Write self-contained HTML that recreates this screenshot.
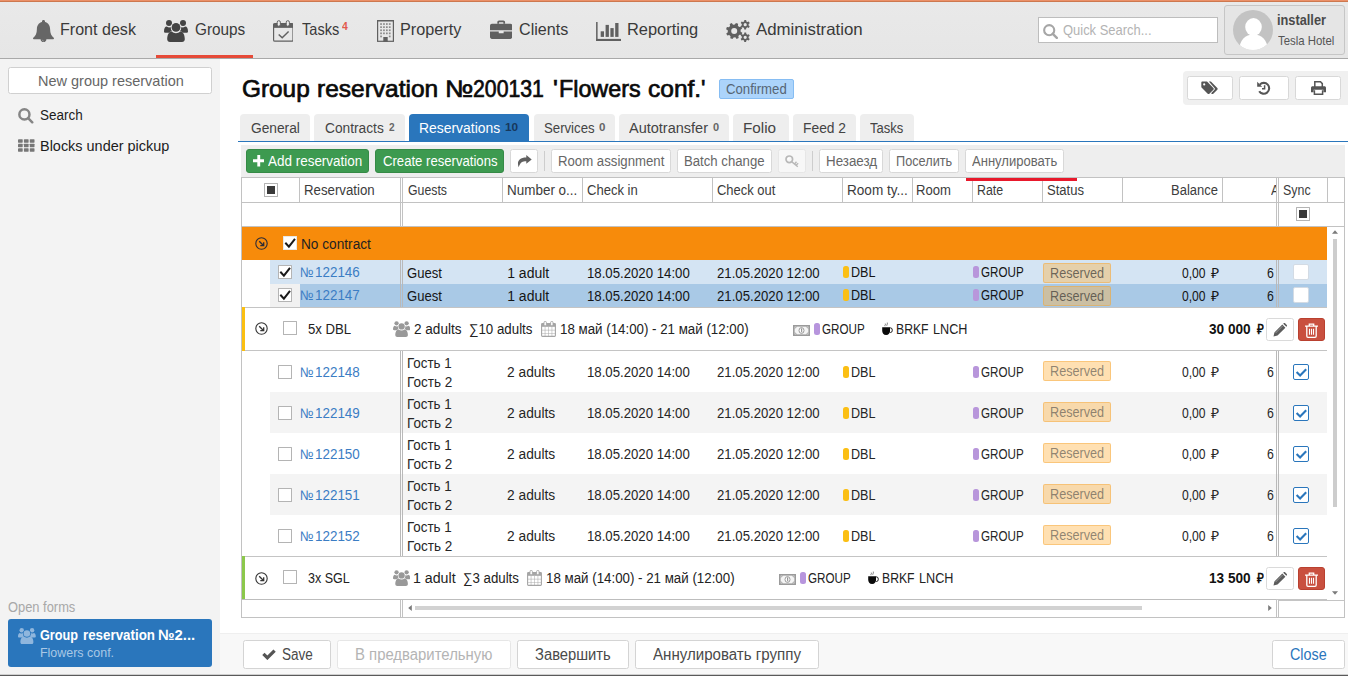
<!DOCTYPE html>
<html lang="en"><head><meta charset="utf-8"><title>Group reservation №200131</title>
<style>
html,body{margin:0;padding:0}
body{width:1348px;height:676px;position:relative;overflow:hidden;background:#fff;font-family:"Liberation Sans",sans-serif;}
div,span,a,button,nav,header,aside,main,footer,section,svg.i,sup,b,i{position:absolute;box-sizing:border-box;margin:0;padding:0}
header,nav,aside,main,footer,section{left:0;top:0;width:0;height:0;display:block}
.t{white-space:nowrap;transform-origin:0 0;text-decoration:none;font-style:normal}
button{border:0;background:none;font:inherit}
.btn{background:#fff;border:1px solid #d8d8d8;border-radius:2.5px}
.tab{background:#eee;border-radius:4px 4px 0 0}
.cb{background:#fff;border:1px solid #b4b4b4;border-radius:.5px}
.pill{border-radius:2.5px}
.rsv{background:rgba(255,178,62,.4);border:1px solid rgba(243,160,40,.4);border-radius:2px}
</style></head>
<body>
<header>
<div style="left:0px;top:0px;width:1348px;height:59px;background:linear-gradient(#e9e9e9,#e6e6e6);border-bottom:1px solid #a9a9a9"></div>
<div style="left:0px;top:0px;width:1348px;height:1px;background:#eb9068"></div>
<div style="left:0px;top:1px;width:1348px;height:1px;background:#cd784f"></div>
<nav>
<a class="t" style="left:59.53px;top:19px;font-size:16.5px;line-height:20px;color:#3a3a3a;transform:scaleX(0.9743);">Front desk</a>
<a class="t" style="left:194.50px;top:19px;font-size:16.5px;line-height:20px;color:#3a3a3a;transform:scaleX(0.9284);">Groups</a>
<a class="t" style="left:302.00px;top:19px;font-size:16.5px;line-height:20px;color:#3a3a3a;transform:scaleX(0.8825);">Tasks</a>
<a class="t" style="left:399.52px;top:19px;font-size:16.5px;line-height:20px;color:#3a3a3a;transform:scaleX(0.9822);">Property</a>
<a class="t" style="left:518.50px;top:19px;font-size:16.5px;line-height:20px;color:#3a3a3a;transform:scaleX(0.9764);">Clients</a>
<a class="t" style="left:626.51px;top:19px;font-size:16.5px;line-height:20px;color:#3a3a3a;transform:scaleX(0.9948);">Reporting</a>
<a class="t" style="left:756.00px;top:19px;font-size:16.5px;line-height:20px;color:#3a3a3a;transform:scaleX(1.0204);">Administration</a>
<sup class="t" style="left:342.20px;top:20px;font-size:11px;line-height:13px;color:#e25a4c;font-weight:700;transform:scaleX(0.9429);">4</sup>
<div style="left:156px;top:55px;width:97px;height:3px;background:#e64a38"></div>
<svg class="i" style="left:32.5px;top:19.6px;" width="21" height="23" viewBox="0 0 21 23"><path fill="#666" d="M10.500 0c0.900 0 1.500 0.600 1.500 1.400v0.500c3.100 0.700 5.100 3.500 5.100 7.200 0 4.600 1.400 7 3.600 8.700 0.500 0.400 0.300 1.400-0.500 1.400H13.400c0 1.600-1.300 2.900-2.900 2.900s-2.900-1.300-2.900-2.900H0.800c-0.800 0-1-1-0.500-1.400C2.500 16.100 3.900 13.700 3.900 9.100c0-3.700 2-6.500 5.100-7.200V1.400C9 0.600 9.600 0 10.500 0z"/><path d="M9.300 19.800c0.200 0.900 0.700 1.300 1.400 1.400" fill="none" stroke="#e9e9e9" stroke-width="0.600" opacity=".7"/></svg>
<svg class="i" style="left:164px;top:20px;" width="24" height="22" viewBox="0 0 24 22"><g fill="#444"><circle cx="5" cy="3.100" r="3"/><circle cx="19" cy="3.100" r="3"/><path d="M0 11.500C0 8.500 1.200 6.600 2.600 6.600c0.700 0.500 1.500 0.800 2.400 0.800 0.700 0 1.400-0.200 2-0.500 0 1.600 0.600 3 1.600 4.200-1.300 0.100-2.400 0.700-3.300 1.700H1.600C0.600 12.800 0 12.300 0 11.500z"/><path d="M24 11.500c0-3-1.200-4.900-2.600-4.900-0.700 0.500-1.500 0.800-2.400 0.800-0.700 0-1.400-0.200-2-0.500 0 1.600-0.600 3-1.600 4.200 1.300 0.100 2.400 0.700 3.300 1.700h3.700c1 0 1.600-0.500 1.600-1.300z"/><circle cx="12" cy="7.400" r="5.300" fill="#e9e9e9"/><path fill="#e9e9e9" d="M2.300 22.600c0-6 3-10.300 6-10.300h7.400c3 0 6 4.300 6 10.300z"/><circle cx="12" cy="7.400" r="4.400"/><path d="M3.200 19.300c0-4.300 1.800-7.700 4.700-7.700 1.100 1 2.500 1.600 4.100 1.600s3-0.600 4.100-1.600c2.900 0 4.700 3.400 4.700 7.700 0 1.600-1.100 2.700-2.800 2.700H6c-1.700 0-2.800-1.100-2.800-2.700z"/></g></svg>
<svg class="i" style="left:272.8px;top:20px;" width="20.6" height="22" viewBox="0 0 21 22"><rect x="0.600" y="3.400" width="19.800" height="18" rx="1.300" fill="none" stroke="#606060" stroke-width="1.200"/><rect x="0.600" y="3.400" width="19.800" height="4.400" fill="#606060"/><rect x="4.300" y="0.500" width="3.200" height="5.600" rx="1.500" fill="#eee" stroke="#606060" stroke-width="1"/><rect x="13.500" y="0.500" width="3.200" height="5.600" rx="1.500" fill="#eee" stroke="#606060" stroke-width="1"/><path d="M5.800 14.500l3.600 3.400 6.500-6.300" fill="none" stroke="#606060" stroke-width="1.500"/></svg>
<svg class="i" style="left:377px;top:20px;" width="17" height="22" viewBox="0 0 17 22"><rect x="0.600" y="0.700" width="15.800" height="20.600" fill="none" stroke="#606060" stroke-width="1.200"/><rect x="0" y="0" width="17" height="1.300" fill="#606060"/><rect x="3.20" y="3.20" width="1.700" height="1.700" fill="#8a8a8a"/><rect x="3.20" y="6.30" width="1.700" height="1.700" fill="#8a8a8a"/><rect x="3.20" y="9.40" width="1.700" height="1.700" fill="#8a8a8a"/><rect x="3.20" y="12.50" width="1.700" height="1.700" fill="#8a8a8a"/><rect x="3.20" y="15.60" width="1.700" height="1.700" fill="#8a8a8a"/><rect x="6.10" y="3.20" width="1.700" height="1.700" fill="#8a8a8a"/><rect x="6.10" y="6.30" width="1.700" height="1.700" fill="#8a8a8a"/><rect x="6.10" y="9.40" width="1.700" height="1.700" fill="#8a8a8a"/><rect x="6.10" y="12.50" width="1.700" height="1.700" fill="#8a8a8a"/><rect x="9.00" y="3.20" width="1.700" height="1.700" fill="#8a8a8a"/><rect x="9.00" y="6.30" width="1.700" height="1.700" fill="#8a8a8a"/><rect x="9.00" y="9.40" width="1.700" height="1.700" fill="#8a8a8a"/><rect x="9.00" y="12.50" width="1.700" height="1.700" fill="#8a8a8a"/><rect x="11.90" y="3.20" width="1.700" height="1.700" fill="#8a8a8a"/><rect x="11.90" y="6.30" width="1.700" height="1.700" fill="#8a8a8a"/><rect x="11.90" y="9.40" width="1.700" height="1.700" fill="#8a8a8a"/><rect x="11.90" y="12.50" width="1.700" height="1.700" fill="#8a8a8a"/><rect x="11.90" y="15.60" width="1.700" height="1.700" fill="#8a8a8a"/><rect x="6.300" y="17" width="4.400" height="5" fill="#606060"/></svg>
<svg class="i" style="left:489.7px;top:19.8px;" width="22.4" height="19.3" viewBox="0 0 23 19"><g fill="#606060"><path d="M7.500 3.500V1.800C7.500 0.800 8.300 0 9.300 0h4.400c1 0 1.800 0.800 1.800 1.800v1.700h-1.800V1.800H9.300v1.700z"/><path d="M2 3.500h19c1.100 0 2 0.900 2 2V10H0V5.500c0-1.100 0.900-2 2-2z"/><path d="M0 11.500h9v1.800h5v-1.800h9V17c0 1.100-0.900 2-2 2H2c-1.100 0-2-0.900-2-2z"/></g></svg>
<svg class="i" style="left:596px;top:21.8px;" width="25.2" height="19" viewBox="0 0 25 19"><g fill="#606060"><rect x="0" y="0" width="1.500" height="19"/><rect x="0" y="16.900" width="25" height="2.100"/><rect x="4.600" y="9.300" width="3.300" height="5.600"/><rect x="9.500" y="2.900" width="3.300" height="12"/><rect x="14.300" y="6.100" width="3.300" height="8.800"/><rect x="19.100" y="1" width="3.300" height="13.900"/></g></svg>
<svg class="i" style="left:725.8px;top:19.8px;" width="24" height="22" viewBox="0 0 24 22"><path fill="#606060" fill-rule="evenodd" d="M14.64,11.65 L16.32,12.73 L15.51,14.93 L13.53,14.67 L12.30,16.01 L12.72,17.96 L10.59,18.95 L9.38,17.37 L7.55,17.44 L6.47,19.12 L4.27,18.31 L4.53,16.33 L3.19,15.10 L1.24,15.52 L0.25,13.39 L1.83,12.18 L1.76,10.35 L0.08,9.27 L0.89,7.07 L2.87,7.33 L4.10,5.99 L3.68,4.04 L5.81,3.05 L7.02,4.63 L8.85,4.56 L9.93,2.88 L12.13,3.69 L11.87,5.67 L13.21,6.90 L15.16,6.48 L16.15,8.61 L14.57,9.82Z M5.20,11 a3.0,3.0 0 1,0 6.0,0 a3.0,3.0 0 1,0 -6.0,0Z"/><path fill="#606060" fill-rule="evenodd" d="M22.59,5.39 L23.71,6.33 L22.80,7.88 L21.43,7.34 L20.30,7.98 L20.05,9.43 L18.25,9.40 L18.03,7.95 L16.91,7.29 L15.53,7.79 L14.65,6.23 L15.80,5.31 L15.81,4.01 L14.69,3.07 L15.60,1.52 L16.97,2.06 L18.10,1.42 L18.35,-0.03 L20.15,-0.00 L20.37,1.45 L21.49,2.11 L22.87,1.61 L23.75,3.17 L22.60,4.09Z M17.60,4.7 a1.6,1.6 0 1,0 3.2,0 a1.6,1.6 0 1,0 -3.2,0Z"/><path fill="#606060" fill-rule="evenodd" d="M22.59,17.99 L23.71,18.93 L22.80,20.48 L21.43,19.94 L20.30,20.58 L20.05,22.03 L18.25,22.00 L18.03,20.55 L16.91,19.89 L15.53,20.39 L14.65,18.83 L15.80,17.91 L15.81,16.61 L14.69,15.67 L15.60,14.12 L16.97,14.66 L18.10,14.02 L18.35,12.57 L20.15,12.60 L20.37,14.05 L21.49,14.71 L22.87,14.21 L23.75,15.77 L22.60,16.69Z M17.60,17.3 a1.6,1.6 0 1,0 3.2,0 a1.6,1.6 0 1,0 -3.2,0Z"/></svg>
</nav>
<div style="left:1038px;top:17px;width:180px;height:26px;background:#fff;border:1px solid #bdbdbd"></div>
<svg class="i" style="left:1043px;top:24px;" width="15" height="15" viewBox="0 0 15 15"><circle cx="6.200" cy="6.200" r="5.05" fill="none" stroke="#a6a6a6" stroke-width="2.1"/><path d="M9.800 9.800L13.800 13.800" stroke="#a6a6a6" stroke-width="2.400" stroke-linecap="round"/></svg>
<span class="t" style="left:1062.50px;top:21px;font-size:15px;line-height:18px;color:#b3b3b3;transform:scaleX(0.8632);">Quick Search...</span>
<div style="left:1224px;top:5px;width:121px;height:50px;background:#e5e5e5;border:1px solid #c6c6c6;border-radius:3px"></div>
<svg class="i" style="left:1233px;top:10px" width="40" height="40" viewBox="0 0 40 40"><defs><clipPath id="avc"><circle cx="20" cy="20" r="20"/></clipPath></defs><circle cx="20" cy="20" r="20" fill="#c3c3c3"/><g clip-path="url(#avc)" fill="#fff"><ellipse cx="20.500" cy="17" rx="8.300" ry="9"/><path d="M6 42c0-11 5.500-17.500 14.500-17.500S35 31 35 42z"/></g></svg>
<span class="t" style="left:1276.80px;top:12px;font-size:14px;line-height:17px;color:#4a4a4a;font-weight:700;transform:scaleX(0.9126);">installer</span>
<span class="t" style="left:1277.50px;top:33px;font-size:13px;line-height:16px;color:#555;transform:scaleX(0.8771);">Tesla Hotel</span>
</header>
<aside>
<div style="left:0px;top:59px;width:220px;height:617px;background:#f3f3f3"></div>
<div class="btn" style="left:8px;top:67px;width:204px;height:27px;border-color:#d0d0d0"></div>
<button class="t" style="left:37.63px;top:72px;font-size:15px;line-height:18px;color:#666;transform:scaleX(0.9661);">New group reservation</button>
<svg class="i" style="left:18px;top:108px;" width="15.5" height="15.5" viewBox="0 0 15 15"><circle cx="6.200" cy="6.200" r="4.90" fill="none" stroke="#858585" stroke-width="2.4"/><path d="M9.800 9.800L13.800 13.800" stroke="#858585" stroke-width="2.400" stroke-linecap="round"/></svg>
<a class="t" style="left:40.40px;top:105px;font-size:15.5px;line-height:19px;color:#1c1c1c;transform:scaleX(0.8703);">Search</a>
<svg class="i" style="left:18px;top:139px;" width="16.5" height="13" viewBox="0 0 16.8 12.8"><rect x="0" y="0.0" width="4.800" height="3.600" rx="0.500" fill="#777"/><rect x="0" y="4.6" width="4.800" height="3.600" rx="0.500" fill="#777"/><rect x="0" y="9.2" width="4.800" height="3.600" rx="0.500" fill="#777"/><rect x="6" y="0.0" width="4.800" height="3.600" rx="0.500" fill="#777"/><rect x="6" y="4.6" width="4.800" height="3.600" rx="0.500" fill="#777"/><rect x="6" y="9.2" width="4.800" height="3.600" rx="0.500" fill="#777"/><rect x="12" y="0.0" width="4.800" height="3.600" rx="0.500" fill="#777"/><rect x="12" y="4.6" width="4.800" height="3.600" rx="0.500" fill="#777"/><rect x="12" y="9.2" width="4.800" height="3.600" rx="0.500" fill="#777"/></svg>
<a class="t" style="left:39.67px;top:136px;font-size:15.5px;line-height:19px;color:#1c1c1c;transform:scaleX(0.9322);">Blocks under pickup</a>
<span class="t" style="left:8.40px;top:599px;font-size:14px;line-height:17px;color:#a8a8a8;transform:scaleX(0.9202);">Open forms</span>
<div style="left:8px;top:619px;width:204px;height:48px;background:#2a76bc;border-radius:3px"></div>
<svg class="i" style="left:17.8px;top:627.8px;" width="17.8" height="16.3" viewBox="0 0 24 22"><g fill="#8fb6dd"><circle cx="5" cy="3.100" r="3"/><circle cx="19" cy="3.100" r="3"/><path d="M0 11.500C0 8.500 1.200 6.600 2.600 6.600c0.700 0.500 1.500 0.800 2.400 0.800 0.700 0 1.400-0.200 2-0.500 0 1.600 0.600 3 1.600 4.200-1.300 0.100-2.400 0.700-3.300 1.700H1.600C0.600 12.800 0 12.300 0 11.500z"/><path d="M24 11.500c0-3-1.200-4.900-2.600-4.900-0.700 0.500-1.500 0.800-2.400 0.800-0.700 0-1.400-0.200-2-0.500 0 1.600-0.600 3-1.600 4.200 1.300 0.100 2.400 0.700 3.300 1.700h3.700c1 0 1.600-0.500 1.600-1.300z"/><circle cx="12" cy="7.400" r="5.300" fill="#2a76bc"/><path fill="#2a76bc" d="M2.300 22.600c0-6 3-10.300 6-10.300h7.400c3 0 6 4.300 6 10.300z"/><circle cx="12" cy="7.400" r="4.400"/><path d="M3.200 19.300c0-4.300 1.800-7.700 4.700-7.700 1.100 1 2.500 1.600 4.100 1.600s3-0.600 4.100-1.600c2.900 0 4.700 3.400 4.700 7.700 0 1.600-1.100 2.700-2.800 2.700H6c-1.700 0-2.800-1.100-2.800-2.700z"/></g></svg>
<span class="t" style="left:40.20px;top:626px;font-size:15px;line-height:18px;color:#fff;font-weight:700;transform:scaleX(0.8454);">Group</span>
<span class="t" style="left:82.80px;top:626px;font-size:15px;line-height:18px;color:#fff;font-weight:700;transform:scaleX(0.8896);">reservation</span>
<span class="t" style="left:158.01px;top:626px;font-size:15px;line-height:18px;color:#fff;font-weight:700;transform:scaleX(0.9891);">№2...</span>
<span class="t" style="left:39.54px;top:645px;font-size:13px;line-height:16px;color:#a9c8e6;transform:scaleX(0.9579);">Flowers conf.</span>
</aside>
<main>
<h1 style="position:absolute;left:0;top:0;margin:0;width:0;height:0;font-weight:400">
<span class="t" style="left:241.69px;top:74px;font-size:24px;line-height:29px;color:#0a0a0a;transform:scaleX(1.0145);-webkit-text-stroke:0.7px #0a0a0a;">Group</span>
<span class="t" style="left:317.38px;top:74px;font-size:24px;line-height:29px;color:#0a0a0a;transform:scaleX(1.0208);-webkit-text-stroke:0.7px #0a0a0a;">reservation</span>
<span class="t" style="left:444.81px;top:74px;font-size:24px;line-height:29px;color:#0a0a0a;transform:scaleX(1.0957);-webkit-text-stroke:0.7px #0a0a0a;">№</span>
<span class="t" style="left:473.11px;top:74px;font-size:24px;line-height:29px;color:#0a0a0a;transform:scaleX(0.8852);-webkit-text-stroke:0.7px #0a0a0a;">200131</span>
<span class="t" style="left:552.63px;top:74px;font-size:24px;line-height:29px;color:#0a0a0a;transform:scaleX(1.0667);-webkit-text-stroke:0.7px #0a0a0a;">'</span>
<span class="t" style="left:559.43px;top:74px;font-size:24px;line-height:29px;color:#0a0a0a;transform:scaleX(0.9709);-webkit-text-stroke:0.7px #0a0a0a;">Flowers</span>
<span class="t" style="left:647.68px;top:74px;font-size:24px;line-height:29px;color:#0a0a0a;transform:scaleX(1.0210);-webkit-text-stroke:0.7px #0a0a0a;">conf.</span>
<span class="t" style="left:700.83px;top:74px;font-size:24px;line-height:29px;color:#0a0a0a;transform:scaleX(0.9667);-webkit-text-stroke:0.7px #0a0a0a;">'</span>
</h1>
<div style="left:719px;top:79px;width:75px;height:20px;background:#acd4fb;border:1px solid #86bdf3;border-radius:2px"></div>
<span class="t" style="left:726.00px;top:81px;font-size:14px;line-height:17px;color:#566574;transform:scaleX(0.9405);">Confirmed</span>
<div style="left:1183px;top:71px;width:165px;height:34px;background:#f0f0f0;border-radius:4px 0 0 4px"></div>
<div class="btn" style="left:1187px;top:76px;width:46px;height:24px;"></div>
<div class="btn" style="left:1239px;top:76px;width:50px;height:24px;"></div>
<div class="btn" style="left:1295px;top:76px;width:46px;height:24px;"></div>
<svg class="i" style="left:1201px;top:81px;" width="17" height="14.5" viewBox="0 0 17 14"><path fill="#555" d="M0.300 1.500C0.300 0.800 0.800 0.300 1.500 0.300H6L12.400 6.700c0.500 0.500 0.500 1.200 0 1.700L8.400 12.400c-0.500 0.500-1.200 0.500-1.700 0L0.300 6z"/><circle cx="3.200" cy="3.200" r="1.100" fill="#fff"/><path fill="#555" d="M7.800 0.300h2.100l6.400 6.400c0.500 0.500 0.500 1.200 0 1.700l-4 4c-0.500 0.500-1.200 0.500-1.700 0l-0.500-0.500 3.400-3.500c0.500-0.500 0.500-1.200 0-1.700z"/></svg>
<svg class="i" style="left:1257px;top:81px;" width="14" height="14" viewBox="0 0 14 14"><path d="M2.800 3.600A5.400 5.400 0 1 1 2.200 10.200" fill="none" stroke="#555" stroke-width="2.100"/><path d="M0.200 0.800v5h5z" fill="#555"/><path d="M7.600 4.200v3.600H5" fill="none" stroke="#555" stroke-width="1.500"/></svg>
<svg class="i" style="left:1311px;top:81px;" width="15" height="14" viewBox="0 0 15 14"><path fill="none" stroke="#555" stroke-width="1.500" d="M3.800 6V0.800h5.700l1.800 1.800V6"/><path fill="#555" d="M1.600 5.200h11.800c0.900 0 1.600 0.700 1.600 1.600v4.400h-2.600V8.800H2.600v2.400H0V6.800c0-0.900 0.700-1.600 1.600-1.600z"/><path fill="none" stroke="#555" stroke-width="1.500" d="M3.400 9.200v4h8.200v-4"/></svg>
<nav>
<div class="tab" style="left:240px;top:114px;width:69.5px;height:28px;"></div>
<a class="t" style="left:250.50px;top:118px;font-size:15.5px;line-height:19px;color:#444;transform:scaleX(0.8867);">General</a>
<div class="tab" style="left:314px;top:114px;width:90.5px;height:28px;"></div>
<a class="t" style="left:324.50px;top:118px;font-size:15.5px;line-height:19px;color:#444;transform:scaleX(0.8862);">Contracts</a>
<span class="t" style="left:389.00px;top:121px;font-size:11px;line-height:13px;color:#666;font-weight:700;transform:scaleX(0.9167);">2</span>
<div class="tab" style="left:409px;top:114px;width:120px;height:28px;background:#2a76bc"></div>
<a class="t" style="left:418.60px;top:118px;font-size:15.5px;line-height:19px;color:#fff;transform:scaleX(0.8974);">Reservations</a>
<span class="t" style="left:505.00px;top:121px;font-size:11px;line-height:13px;color:#17385c;font-weight:700;transform:scaleX(1.0728);">10</span>
<div class="tab" style="left:534px;top:114px;width:81px;height:28px;"></div>
<a class="t" style="left:543.70px;top:118px;font-size:15.5px;line-height:19px;color:#444;transform:scaleX(0.8511);">Services</a>
<span class="t" style="left:598.70px;top:121px;font-size:11px;line-height:13px;color:#666;font-weight:700;transform:scaleX(1.0500);">0</span>
<div class="tab" style="left:619px;top:114px;width:110px;height:28px;"></div>
<a class="t" style="left:629.20px;top:118px;font-size:15.5px;line-height:19px;color:#444;transform:scaleX(0.9351);">Autotransfer</a>
<span class="t" style="left:713.00px;top:121px;font-size:11px;line-height:13px;color:#666;font-weight:700;">0</span>
<div class="tab" style="left:733px;top:114px;width:56px;height:28px;"></div>
<a class="t" style="left:743.01px;top:118px;font-size:15.5px;line-height:19px;color:#444;transform:scaleX(0.9851);">Folio</a>
<div class="tab" style="left:793px;top:114px;width:63px;height:28px;"></div>
<a class="t" style="left:802.71px;top:118px;font-size:15.5px;line-height:19px;color:#444;transform:scaleX(0.8920);">Feed 2</a>
<div class="tab" style="left:860px;top:114px;width:54px;height:28px;"></div>
<a class="t" style="left:870.00px;top:118px;font-size:15.5px;line-height:19px;color:#444;transform:scaleX(0.8402);">Tasks</a>
<div style="left:238px;top:141px;width:1110px;height:1px;background:#2a76bc"></div>
</nav>
<section>
<div style="left:241px;top:145px;width:1104px;height:33px;background:#eeeeee"></div>
<div style="left:246px;top:149px;width:123px;height:24px;background:#3d9a50;border:1px solid #358a46;border-radius:3px"></div>
<svg class="i" style="left:252.5px;top:155px;" width="11.5" height="11.5" viewBox="0 0 12 12"><path fill="#fff" d="M4.500 0h3v4.500H12v3H7.500V12h-3V7.500H0v-3h4.500z"/></svg>
<button class="t" style="left:268.00px;top:153px;font-size:14px;line-height:17px;color:#fff;transform:scaleX(0.9613);">Add reservation</button>
<div style="left:375px;top:149px;width:129px;height:24px;background:#3d9a50;border:1px solid #358a46;border-radius:3px"></div>
<button class="t" style="left:382.50px;top:153px;font-size:14px;line-height:17px;color:#fff;transform:scaleX(0.9373);">Create reservations</button>
<div class="btn" style="left:510px;top:149px;width:28px;height:24px;"></div>
<svg class="i" style="left:516.6px;top:154.5px;" width="15" height="13" viewBox="0 0 15 13"><path fill="#606060" d="M9.300 0L14.700 4.400 9.300 8.700V6.300C5.600 6.300 3.300 7.200 1.700 12.300C-0.300 7 1.600 2.500 9.300 2.500z"/></svg>
<div style="left:544px;top:151px;width:1px;height:20px;background:#cdcdcd"></div>
<div class="btn" style="left:551px;top:149px;width:119.5px;height:24px;"></div>
<button class="t" style="left:557.56px;top:153px;font-size:14px;line-height:17px;color:#666;transform:scaleX(0.9425);">Room assignment</button>
<div class="btn" style="left:677px;top:149px;width:94.5px;height:24px;"></div>
<button class="t" style="left:683.76px;top:153px;font-size:14px;line-height:17px;color:#666;transform:scaleX(0.9407);">Batch change</button>
<div class="btn" style="left:778px;top:149px;width:28px;height:24px;border-color:#e6e6e6;background:#f7f7f7"></div>
<svg class="i" style="left:785px;top:154.5px;" width="14" height="13" viewBox="0 0 14 13"><circle cx="4.300" cy="4.300" r="3.300" fill="none" stroke="#b8b8b8" stroke-width="1.700"/><circle cx="3.600" cy="3.600" r="0.900" fill="#fff"/><path d="M6.600 6.600l6.200 5.200M9.500 9l2-2.300M11 10.300l2.200-2" fill="none" stroke="#b8b8b8" stroke-width="1.400"/></svg>
<div style="left:812px;top:151px;width:1px;height:20px;background:#cdcdcd"></div>
<div class="btn" style="left:819px;top:149px;width:64px;height:24px;"></div>
<button class="t" style="left:825.55px;top:153px;font-size:14px;line-height:17px;color:#666;transform:scaleX(0.9545);">Незаезд</button>
<div class="btn" style="left:889px;top:149px;width:70px;height:24px;"></div>
<button class="t" style="left:896.09px;top:153px;font-size:14px;line-height:17px;color:#666;transform:scaleX(0.9080);">Поселить</button>
<div class="btn" style="left:965px;top:149px;width:99px;height:24px;"></div>
<button class="t" style="left:972.00px;top:153px;font-size:14px;line-height:17px;color:#666;transform:scaleX(0.9318);">Аннулировать</button>
</section>
<section>
<div style="left:241px;top:177px;width:1104px;height:441px;border:1px solid #c2c2c2;background:#fff"></div>
<div style="left:299px;top:178px;width:1px;height:24px;background:#c2c2c2"></div>
<div style="left:502px;top:178px;width:1px;height:24px;background:#c2c2c2"></div>
<div style="left:582px;top:178px;width:1px;height:24px;background:#c2c2c2"></div>
<div style="left:712px;top:178px;width:1px;height:24px;background:#c2c2c2"></div>
<div style="left:842px;top:178px;width:1px;height:24px;background:#c2c2c2"></div>
<div style="left:912px;top:178px;width:1px;height:24px;background:#c2c2c2"></div>
<div style="left:972px;top:178px;width:1px;height:24px;background:#c2c2c2"></div>
<div style="left:1042px;top:178px;width:1px;height:24px;background:#c2c2c2"></div>
<div style="left:1122px;top:178px;width:1px;height:24px;background:#c2c2c2"></div>
<div style="left:1222px;top:178px;width:1px;height:24px;background:#c2c2c2"></div>
<div style="left:1327px;top:178px;width:1px;height:24px;background:#c2c2c2"></div>
<div style="left:242px;top:202px;width:1102px;height:1px;background:#c2c2c2"></div>
<div style="left:242px;top:226px;width:1102px;height:1px;background:#c2c2c2"></div>
<div style="left:400px;top:178px;width:1px;height:439px;background:#c2c2c2"></div>
<div style="left:402px;top:178px;width:1px;height:439px;background:#c2c2c2"></div>
<div style="left:1276px;top:178px;width:1px;height:439px;background:#c2c2c2"></div>
<div style="left:1278px;top:178px;width:1px;height:439px;background:#c2c2c2"></div>
<div class="cb" style="left:264px;top:183px;width:14px;height:14px;"></div>
<div style="left:267px;top:186px;width:8px;height:8px;background:#3a3a3a"></div>
<div class="cb" style="left:1296px;top:207px;width:14px;height:14px;"></div>
<div style="left:1299px;top:210px;width:8px;height:8px;background:#3a3a3a"></div>
<span class="t" style="left:303.55px;top:182px;font-size:14px;line-height:17px;color:#3c3c3c;transform:scaleX(0.9463);">Reservation</span>
<span class="t" style="left:407.50px;top:182px;font-size:14px;line-height:17px;color:#3c3c3c;transform:scaleX(0.8793);">Guests</span>
<span class="t" style="left:506.54px;top:182px;font-size:14px;line-height:17px;color:#3c3c3c;transform:scaleX(0.9614);">Number o...</span>
<span class="t" style="left:587.00px;top:182px;font-size:14px;line-height:17px;color:#3c3c3c;transform:scaleX(0.9314);">Check in</span>
<span class="t" style="left:717.00px;top:182px;font-size:14px;line-height:17px;color:#3c3c3c;transform:scaleX(0.9264);">Check out</span>
<span class="t" style="left:846.53px;top:182px;font-size:14px;line-height:17px;color:#3c3c3c;transform:scaleX(0.9694);">Room ty...</span>
<span class="t" style="left:916.26px;top:182px;font-size:14px;line-height:17px;color:#3c3c3c;transform:scaleX(0.9360);">Room</span>
<span class="t" style="left:977.02px;top:182px;font-size:14px;line-height:17px;color:#3c3c3c;transform:scaleX(0.8824);">Rate</span>
<span class="t" style="left:1047.00px;top:182px;font-size:14px;line-height:17px;color:#3c3c3c;transform:scaleX(0.9322);">Status</span>
<span class="t" style="left:1170.57px;top:182px;font-size:14px;line-height:17px;color:#3c3c3c;transform:scaleX(0.9276);">Balance</span>
<span class="t" style="left:1282.70px;top:182px;font-size:14px;line-height:17px;color:#3c3c3c;transform:scaleX(0.8868);">Sync</span>
<div style="left:1268px;top:183px;width:8px;height:16px;overflow:hidden"><span class="t" style="left:2.5px;top:-1px;font-size:14px;line-height:17px;color:#3c3c3c;transform:scaleX(.9)">Amount</span></div>
<div style="left:242px;top:227px;width:1085px;height:33px;background:#f78b0b"></div>
<svg class="i" style="left:255px;top:237px" width="13" height="13" viewBox="0 0 13 13"><circle cx="6.500" cy="6.500" r="5.700" fill="none" stroke="#2b2b38" stroke-width="1.100"/><path d="M4.200 4.200l4 4M8.700 5.300v3.400H5.300" fill="none" stroke="#2b2b38" stroke-width="1.300"/></svg>
<div class="cb" style="left:283px;top:236px;width:14px;height:14px;border-color:#e8e8e8"></div>
<svg class="i" style="left:283px;top:236px" width="14" height="14" viewBox="0 0 14 14"><path d="M2.300 6.700L5.900 10.600 12 2.900" fill="none" stroke="#1a1a1a" stroke-width="2"/></svg>
<span class="t" style="left:300.52px;top:236px;font-size:14px;line-height:17px;color:#222;transform:scaleX(0.9760);">No contract</span>
<div style="left:270px;top:260px;width:1057px;height:24px;background:#d4e4f3"></div>
<div style="left:400px;top:260px;width:1px;height:24px;background:#b9b9b9"></div>
<div style="left:402px;top:260px;width:1px;height:24px;background:#b9b9b9"></div>
<div style="left:1276px;top:260px;width:1px;height:24px;background:#b9b9b9"></div>
<div style="left:1278px;top:260px;width:1px;height:24px;background:#b9b9b9"></div>
<div class="cb" style="left:278px;top:265px;width:14px;height:14px;"></div>
<svg class="i" style="left:278px;top:265px" width="14" height="14" viewBox="0 0 14 14"><path d="M2.300 6.700L5.900 10.600 12 2.900" fill="none" stroke="#1a1a1a" stroke-width="2"/></svg>
<a class="t" style="left:300.29px;top:264px;font-size:14px;line-height:17px;color:#3b7dc4;transform:scaleX(0.9143);">№</a>
<a class="t" style="left:314.74px;top:264px;font-size:14px;line-height:17px;color:#3b7dc4;transform:scaleX(0.9580);">122146</a>
<span class="t" style="left:407.00px;top:265px;font-size:14px;line-height:17px;color:#151515;transform:scaleX(0.9343);">Guest</span>
<span class="t" style="left:507.20px;top:265px;font-size:14px;line-height:17px;color:#151515;">1 adult</span>
<span class="t" style="left:587.36px;top:265px;font-size:14px;line-height:17px;color:#151515;transform:scaleX(0.9426);">18.05.2020 14:00</span>
<span class="t" style="left:716.90px;top:265px;font-size:14px;line-height:17px;color:#151515;transform:scaleX(0.9413);">21.05.2020 12:00</span>
<div class="pill" style="left:843px;top:266px;width:6px;height:12px;background:#fbbf14"></div>
<span class="t" style="left:850.70px;top:264px;font-size:14px;line-height:17px;color:#151515;transform:scaleX(0.8999);">DBL</span>
<div class="pill" style="left:973px;top:266px;width:6px;height:12px;background:#b896db"></div>
<span class="t" style="left:980.80px;top:264px;font-size:14px;line-height:17px;color:#151515;transform:scaleX(0.8314);">GROUP</span>
<div class="rsv" style="left:1043px;top:263px;width:68px;height:20px;"></div>
<span class="t" style="left:1049.60px;top:265px;font-size:14px;line-height:17px;color:rgba(45,45,45,.66);transform:scaleX(0.9031);">Reserved</span>
<span class="t" style="left:1182.20px;top:265px;font-size:14px;line-height:17px;color:#151515;transform:scaleX(0.8667);">0,00</span>
<span class="t" style="left:1211.00px;top:265px;font-size:14px;line-height:17px;color:#151515;">₽</span>
<span class="t" style="left:1267.00px;top:265px;font-size:14px;line-height:17px;color:#151515;transform:scaleX(0.8750);">6</span>
<div style="left:1293px;top:264px;width:16px;height:16px;border:1px solid #d3dbe4;border-radius:2px;background:#fff"></div>
<div style="left:270px;top:284px;width:1057px;height:23px;background:#a9c9e6"></div>
<div style="left:270px;top:284px;width:30px;height:23px;background:#f1f1f1"></div>
<div style="left:400px;top:284px;width:1px;height:23px;background:#b9b9b9"></div>
<div style="left:402px;top:284px;width:1px;height:23px;background:#b9b9b9"></div>
<div style="left:1276px;top:284px;width:1px;height:23px;background:#b9b9b9"></div>
<div style="left:1278px;top:284px;width:1px;height:23px;background:#b9b9b9"></div>
<div class="cb" style="left:278px;top:288px;width:14px;height:14px;"></div>
<svg class="i" style="left:278px;top:288px" width="14" height="14" viewBox="0 0 14 14"><path d="M2.300 6.700L5.900 10.600 12 2.900" fill="none" stroke="#1a1a1a" stroke-width="2"/></svg>
<a class="t" style="left:300.29px;top:287px;font-size:14px;line-height:17px;color:#3b7dc4;transform:scaleX(0.9143);">№</a>
<a class="t" style="left:314.74px;top:287px;font-size:14px;line-height:17px;color:#3b7dc4;transform:scaleX(0.9580);">122147</a>
<span class="t" style="left:407.00px;top:288px;font-size:14px;line-height:17px;color:#151515;transform:scaleX(0.9343);">Guest</span>
<span class="t" style="left:507.20px;top:288px;font-size:14px;line-height:17px;color:#151515;">1 adult</span>
<span class="t" style="left:587.36px;top:288px;font-size:14px;line-height:17px;color:#151515;transform:scaleX(0.9426);">18.05.2020 14:00</span>
<span class="t" style="left:716.90px;top:288px;font-size:14px;line-height:17px;color:#151515;transform:scaleX(0.9413);">21.05.2020 12:00</span>
<div class="pill" style="left:843px;top:289px;width:6px;height:12px;background:#fbbf14"></div>
<span class="t" style="left:850.70px;top:287px;font-size:14px;line-height:17px;color:#151515;transform:scaleX(0.8999);">DBL</span>
<div class="pill" style="left:973px;top:289px;width:6px;height:12px;background:#b896db"></div>
<span class="t" style="left:980.80px;top:287px;font-size:14px;line-height:17px;color:#151515;transform:scaleX(0.8314);">GROUP</span>
<div class="rsv" style="left:1043px;top:286px;width:68px;height:20px;"></div>
<span class="t" style="left:1049.60px;top:288px;font-size:14px;line-height:17px;color:rgba(45,45,45,.66);transform:scaleX(0.9031);">Reserved</span>
<span class="t" style="left:1182.20px;top:288px;font-size:14px;line-height:17px;color:#151515;transform:scaleX(0.8667);">0,00</span>
<span class="t" style="left:1211.00px;top:288px;font-size:14px;line-height:17px;color:#151515;">₽</span>
<span class="t" style="left:1267.00px;top:288px;font-size:14px;line-height:17px;color:#151515;transform:scaleX(0.8750);">6</span>
<div style="left:1293px;top:287px;width:16px;height:16px;border:1px solid #d3dbe4;border-radius:2px;background:#fff"></div>
<div style="left:242px;top:308px;width:1085px;height:42px;background:#fff"></div>
<div style="left:242px;top:307px;width:1085px;height:1px;background:#c4c4c4"></div>
<div style="left:242px;top:350px;width:1085px;height:1px;background:#c4c4c4"></div>
<div style="left:242px;top:307px;width:3px;height:44px;background:#fbbf10"></div>
<svg class="i" style="left:255px;top:322px" width="13" height="13" viewBox="0 0 13 13"><circle cx="6.500" cy="6.500" r="5.700" fill="none" stroke="#333" stroke-width="1.100"/><path d="M4.200 4.200l4 4M8.700 5.300v3.400H5.300" fill="none" stroke="#333" stroke-width="1.300"/></svg>
<div class="cb" style="left:283px;top:321px;width:14px;height:14px;"></div>
<span class="t" style="left:307.90px;top:321px;font-size:14px;line-height:17px;color:#222;transform:scaleX(0.9409);">5x DBL</span>
<svg class="i" style="left:392.8px;top:320.8px;" width="17.2" height="16" viewBox="0 0 24 22"><g fill="#999"><circle cx="5" cy="3.100" r="3"/><circle cx="19" cy="3.100" r="3"/><path d="M0 11.500C0 8.500 1.200 6.600 2.600 6.600c0.700 0.500 1.500 0.800 2.400 0.800 0.700 0 1.400-0.200 2-0.500 0 1.600 0.600 3 1.600 4.200-1.300 0.100-2.400 0.700-3.300 1.700H1.600C0.600 12.800 0 12.300 0 11.500z"/><path d="M24 11.500c0-3-1.200-4.900-2.600-4.900-0.700 0.500-1.500 0.800-2.400 0.800-0.700 0-1.400-0.200-2-0.500 0 1.600-0.600 3-1.600 4.200 1.300 0.100 2.400 0.700 3.300 1.700h3.700c1 0 1.600-0.500 1.600-1.300z"/><circle cx="12" cy="7.400" r="5.300" fill="#fff"/><path fill="#fff" d="M2.300 22.600c0-6 3-10.300 6-10.300h7.400c3 0 6 4.300 6 10.300z"/><circle cx="12" cy="7.400" r="4.400"/><path d="M3.200 19.300c0-4.300 1.800-7.700 4.700-7.700 1.100 1 2.500 1.600 4.100 1.600s3-0.600 4.100-1.600c2.900 0 4.700 3.400 4.700 7.700 0 1.600-1.100 2.700-2.800 2.700H6c-1.700 0-2.800-1.100-2.800-2.700z"/></g></svg>
<span class="t" style="left:413.80px;top:321px;font-size:14px;line-height:17px;color:#222;transform:scaleX(0.9687);">2 adults</span>
<span class="t" style="left:468.55px;top:321px;font-size:14px;line-height:17px;color:#222;transform:scaleX(0.9498);">∑10 adults</span>
<svg class="i" style="left:541.0px;top:320.8px;" width="15" height="16" viewBox="0 0 15 16"><rect x="0.600" y="2.600" width="13.800" height="12.800" rx="0.800" fill="none" stroke="#a5a5a5" stroke-width="1.100"/><rect x="0.600" y="2.600" width="13.800" height="3.200" fill="#a5a5a5"/><rect x="3" y="0.400" width="2.400" height="4.400" rx="1.100" fill="#fff" stroke="#a5a5a5" stroke-width="0.900"/><rect x="9.600" y="0.400" width="2.400" height="4.400" rx="1.100" fill="#fff" stroke="#a5a5a5" stroke-width="0.900"/><path d="M4.10 6v9.500" stroke="#a5a5a5" stroke-width="0.700" opacity=".7"/><path d="M7.50 6v9.500" stroke="#a5a5a5" stroke-width="0.700" opacity=".7"/><path d="M10.90 6v9.500" stroke="#a5a5a5" stroke-width="0.700" opacity=".7"/><path d="M0.700 9.20h13.600" stroke="#a5a5a5" stroke-width="0.700" opacity=".7"/><path d="M0.700 12.40h13.600" stroke="#a5a5a5" stroke-width="0.700" opacity=".7"/></svg>
<span class="t" style="left:559.75px;top:321px;font-size:14px;line-height:17px;color:#222;transform:scaleX(0.9509);">18 май (14:00) - 21 май (12:00)</span>
<svg class="i" style="left:793px;top:325px;" width="17" height="11" viewBox="0 0 17 11"><rect x="0.800" y="0.800" width="15.400" height="9.400" fill="#f4f4f4" stroke="#9a9a9a" stroke-width="1.600"/><path d="M1.500 3.200A2 2 0 0 0 3.400 1.500M15.500 3.200A2 2 0 0 1 13.600 1.500M1.500 7.800A2 2 0 0 1 3.400 9.500M15.500 7.800A2 2 0 0 0 13.600 9.500" fill="none" stroke="#9a9a9a" stroke-width="0.900"/><ellipse cx="8.500" cy="5.500" rx="2.500" ry="2.900" fill="#fff" stroke="#9a9a9a" stroke-width="1"/><path d="M8 4.300l0.700-0.500v3.500" fill="none" stroke="#777" stroke-width="0.900"/></svg>
<div class="pill" style="left:814px;top:322.5px;width:6px;height:12px;background:#b795dd"></div>
<span class="t" style="left:821.70px;top:321px;font-size:14px;line-height:17px;color:#222;transform:scaleX(0.8333);">GROUP</span>
<svg class="i" style="left:881.6px;top:322px;" width="11" height="13" viewBox="0 0 11 13"><path fill="#0a0a0a" d="M0.200 5.300h7.800v3.200c0 2.500-1.300 4.500-3.900 4.500S0.200 11 0.200 8.500z"/><ellipse cx="8.600" cy="8.200" rx="1.700" ry="2.300" fill="none" stroke="#0a0a0a" stroke-width="0.900"/><path d="M3 4.200c-0.500-1 0.900-1.500 0.300-2.600M4.800 3.800c-0.300-0.800 1-1.600 0.500-3.200" fill="none" stroke="#444" stroke-width="0.700"/></svg>
<span class="t" style="left:896.03px;top:321px;font-size:14px;line-height:17px;color:#222;transform:scaleX(0.8718);">BRKF</span>
<span class="t" style="left:933.10px;top:321px;font-size:14px;line-height:17px;color:#222;transform:scaleX(0.9026);">LNCH</span>
<span class="t" style="left:1208.90px;top:321px;font-size:14px;line-height:17px;color:#111;font-weight:700;transform:scaleX(0.9713);">30 000</span>
<span class="t" style="left:1256.64px;top:321px;font-size:14px;line-height:17px;color:#111;font-weight:700;transform:scaleX(0.8444);">₽</span>
<div class="btn" style="left:1266px;top:318px;width:28px;height:23px;border-color:#dadada"></div>
<svg class="i" style="left:1273px;top:323px;" width="14" height="14" viewBox="0 0 14 14"><path fill="#5c5c5c" d="M0.500 13.500l0.900-4L9.300 1.600l3.100 3.100-7.900 7.900zM10.200 0.700l0.500-0.500c0.400-0.400 1-0.400 1.400 0l1.700 1.700c0.400 0.400 0.400 1 0 1.400l-0.500 0.500z"/><path d="M2.600 10l7-7" stroke="#fff" stroke-width="0.700" opacity=".5"/></svg>
<div style="left:1298px;top:318px;width:27px;height:23px;background:#c9503f;border:1px solid #b9402f;border-radius:3px"></div>
<svg class="i" style="left:1305px;top:322.5px;" width="13" height="15" viewBox="0 0 13 15"><g fill="none" stroke="#fff" stroke-width="1.300"><path d="M0 3.200h13M4.300 3V1.200h4.400V3M1.800 3.500V13c0 0.700 0.500 1.300 1.200 1.300h7c0.700 0 1.200-0.600 1.200-1.300V3.500"/><path d="M4.500 5.800v6M6.500 5.800v6M8.500 5.800v6" stroke-width="1.100"/></g></svg>
<div style="left:400px;top:351px;width:1px;height:41px;background:#b9b9b9"></div>
<div style="left:402px;top:351px;width:1px;height:41px;background:#b9b9b9"></div>
<div style="left:1276px;top:351px;width:1px;height:41px;background:#b9b9b9"></div>
<div style="left:1278px;top:351px;width:1px;height:41px;background:#b9b9b9"></div>
<div class="cb" style="left:278px;top:365px;width:14px;height:14px;"></div>
<a class="t" style="left:300.29px;top:364px;font-size:14px;line-height:17px;color:#3b7dc4;transform:scaleX(0.9143);">№</a>
<a class="t" style="left:314.74px;top:364px;font-size:14px;line-height:17px;color:#3b7dc4;transform:scaleX(0.9580);">122148</a>
<span class="t" style="left:406.54px;top:355px;font-size:14px;line-height:17px;color:#262626;transform:scaleX(0.9560);">Гость 1</span>
<span class="t" style="left:406.53px;top:374px;font-size:14px;line-height:17px;color:#262626;transform:scaleX(0.9668);">Гость 2</span>
<span class="t" style="left:507.40px;top:364px;font-size:14px;line-height:17px;color:#262626;transform:scaleX(0.9830);">2 adults</span>
<span class="t" style="left:587.36px;top:364px;font-size:14px;line-height:17px;color:#262626;transform:scaleX(0.9426);">18.05.2020 14:00</span>
<span class="t" style="left:716.90px;top:364px;font-size:14px;line-height:17px;color:#262626;transform:scaleX(0.9413);">21.05.2020 12:00</span>
<div class="pill" style="left:843px;top:366px;width:6px;height:12px;background:#fbbf14"></div>
<span class="t" style="left:850.70px;top:364px;font-size:14px;line-height:17px;color:#262626;transform:scaleX(0.8999);">DBL</span>
<div class="pill" style="left:973px;top:366px;width:6px;height:12px;background:#b896db"></div>
<span class="t" style="left:980.80px;top:364px;font-size:14px;line-height:17px;color:#262626;transform:scaleX(0.8314);">GROUP</span>
<div class="rsv" style="left:1043px;top:361px;width:68px;height:20px;"></div>
<span class="t" style="left:1049.60px;top:363px;font-size:14px;line-height:17px;color:rgba(70,70,70,.6);transform:scaleX(0.9031);">Reserved</span>
<span class="t" style="left:1182.20px;top:364px;font-size:14px;line-height:17px;color:#262626;transform:scaleX(0.8667);">0,00</span>
<span class="t" style="left:1211.00px;top:364px;font-size:14px;line-height:17px;color:#262626;">₽</span>
<span class="t" style="left:1267.00px;top:364px;font-size:14px;line-height:17px;color:#262626;transform:scaleX(0.8750);">6</span>
<div style="left:1293px;top:364px;width:16px;height:16px;border:1px solid #2a76bc;border-radius:2px;background:#fff"></div>
<svg class="i" style="left:1293px;top:364px" width="16" height="16" viewBox="0 0 16 16"><path d="M3.600 8L7.100 11.500 13.200 5.200" fill="none" stroke="#2a76bc" stroke-width="2.100"/></svg>
<div style="left:270px;top:392px;width:1057px;height:41px;background:#f4f4f4"></div>
<div style="left:400px;top:392px;width:1px;height:41px;background:#b9b9b9"></div>
<div style="left:402px;top:392px;width:1px;height:41px;background:#b9b9b9"></div>
<div style="left:1276px;top:392px;width:1px;height:41px;background:#b9b9b9"></div>
<div style="left:1278px;top:392px;width:1px;height:41px;background:#b9b9b9"></div>
<div class="cb" style="left:278px;top:406px;width:14px;height:14px;"></div>
<a class="t" style="left:300.29px;top:405px;font-size:14px;line-height:17px;color:#3b7dc4;transform:scaleX(0.9143);">№</a>
<a class="t" style="left:314.74px;top:405px;font-size:14px;line-height:17px;color:#3b7dc4;transform:scaleX(0.9580);">122149</a>
<span class="t" style="left:406.54px;top:396px;font-size:14px;line-height:17px;color:#262626;transform:scaleX(0.9560);">Гость 1</span>
<span class="t" style="left:406.53px;top:415px;font-size:14px;line-height:17px;color:#262626;transform:scaleX(0.9668);">Гость 2</span>
<span class="t" style="left:507.40px;top:405px;font-size:14px;line-height:17px;color:#262626;transform:scaleX(0.9830);">2 adults</span>
<span class="t" style="left:587.36px;top:405px;font-size:14px;line-height:17px;color:#262626;transform:scaleX(0.9426);">18.05.2020 14:00</span>
<span class="t" style="left:716.90px;top:405px;font-size:14px;line-height:17px;color:#262626;transform:scaleX(0.9413);">21.05.2020 12:00</span>
<div class="pill" style="left:843px;top:407px;width:6px;height:12px;background:#fbbf14"></div>
<span class="t" style="left:850.70px;top:405px;font-size:14px;line-height:17px;color:#262626;transform:scaleX(0.8999);">DBL</span>
<div class="pill" style="left:973px;top:407px;width:6px;height:12px;background:#b896db"></div>
<span class="t" style="left:980.80px;top:405px;font-size:14px;line-height:17px;color:#262626;transform:scaleX(0.8314);">GROUP</span>
<div class="rsv" style="left:1043px;top:402px;width:68px;height:20px;"></div>
<span class="t" style="left:1049.60px;top:404px;font-size:14px;line-height:17px;color:rgba(70,70,70,.6);transform:scaleX(0.9031);">Reserved</span>
<span class="t" style="left:1182.20px;top:405px;font-size:14px;line-height:17px;color:#262626;transform:scaleX(0.8667);">0,00</span>
<span class="t" style="left:1211.00px;top:405px;font-size:14px;line-height:17px;color:#262626;">₽</span>
<span class="t" style="left:1267.00px;top:405px;font-size:14px;line-height:17px;color:#262626;transform:scaleX(0.8750);">6</span>
<div style="left:1293px;top:405px;width:16px;height:16px;border:1px solid #2a76bc;border-radius:2px;background:#fff"></div>
<svg class="i" style="left:1293px;top:405px" width="16" height="16" viewBox="0 0 16 16"><path d="M3.600 8L7.100 11.500 13.200 5.200" fill="none" stroke="#2a76bc" stroke-width="2.100"/></svg>
<div style="left:400px;top:433px;width:1px;height:41px;background:#b9b9b9"></div>
<div style="left:402px;top:433px;width:1px;height:41px;background:#b9b9b9"></div>
<div style="left:1276px;top:433px;width:1px;height:41px;background:#b9b9b9"></div>
<div style="left:1278px;top:433px;width:1px;height:41px;background:#b9b9b9"></div>
<div class="cb" style="left:278px;top:447px;width:14px;height:14px;"></div>
<a class="t" style="left:300.29px;top:446px;font-size:14px;line-height:17px;color:#3b7dc4;transform:scaleX(0.9143);">№</a>
<a class="t" style="left:314.74px;top:446px;font-size:14px;line-height:17px;color:#3b7dc4;transform:scaleX(0.9580);">122150</a>
<span class="t" style="left:406.54px;top:437px;font-size:14px;line-height:17px;color:#262626;transform:scaleX(0.9560);">Гость 1</span>
<span class="t" style="left:406.53px;top:456px;font-size:14px;line-height:17px;color:#262626;transform:scaleX(0.9668);">Гость 2</span>
<span class="t" style="left:507.40px;top:446px;font-size:14px;line-height:17px;color:#262626;transform:scaleX(0.9830);">2 adults</span>
<span class="t" style="left:587.36px;top:446px;font-size:14px;line-height:17px;color:#262626;transform:scaleX(0.9426);">18.05.2020 14:00</span>
<span class="t" style="left:716.90px;top:446px;font-size:14px;line-height:17px;color:#262626;transform:scaleX(0.9413);">21.05.2020 12:00</span>
<div class="pill" style="left:843px;top:448px;width:6px;height:12px;background:#fbbf14"></div>
<span class="t" style="left:850.70px;top:446px;font-size:14px;line-height:17px;color:#262626;transform:scaleX(0.8999);">DBL</span>
<div class="pill" style="left:973px;top:448px;width:6px;height:12px;background:#b896db"></div>
<span class="t" style="left:980.80px;top:446px;font-size:14px;line-height:17px;color:#262626;transform:scaleX(0.8314);">GROUP</span>
<div class="rsv" style="left:1043px;top:443px;width:68px;height:20px;"></div>
<span class="t" style="left:1049.60px;top:445px;font-size:14px;line-height:17px;color:rgba(70,70,70,.6);transform:scaleX(0.9031);">Reserved</span>
<span class="t" style="left:1182.20px;top:446px;font-size:14px;line-height:17px;color:#262626;transform:scaleX(0.8667);">0,00</span>
<span class="t" style="left:1211.00px;top:446px;font-size:14px;line-height:17px;color:#262626;">₽</span>
<span class="t" style="left:1267.00px;top:446px;font-size:14px;line-height:17px;color:#262626;transform:scaleX(0.8750);">6</span>
<div style="left:1293px;top:446px;width:16px;height:16px;border:1px solid #2a76bc;border-radius:2px;background:#fff"></div>
<svg class="i" style="left:1293px;top:446px" width="16" height="16" viewBox="0 0 16 16"><path d="M3.600 8L7.100 11.500 13.200 5.200" fill="none" stroke="#2a76bc" stroke-width="2.100"/></svg>
<div style="left:270px;top:474px;width:1057px;height:41px;background:#f4f4f4"></div>
<div style="left:400px;top:474px;width:1px;height:41px;background:#b9b9b9"></div>
<div style="left:402px;top:474px;width:1px;height:41px;background:#b9b9b9"></div>
<div style="left:1276px;top:474px;width:1px;height:41px;background:#b9b9b9"></div>
<div style="left:1278px;top:474px;width:1px;height:41px;background:#b9b9b9"></div>
<div class="cb" style="left:278px;top:488px;width:14px;height:14px;"></div>
<a class="t" style="left:300.29px;top:487px;font-size:14px;line-height:17px;color:#3b7dc4;transform:scaleX(0.9143);">№</a>
<a class="t" style="left:314.74px;top:487px;font-size:14px;line-height:17px;color:#3b7dc4;transform:scaleX(0.9580);">122151</a>
<span class="t" style="left:406.54px;top:478px;font-size:14px;line-height:17px;color:#262626;transform:scaleX(0.9560);">Гость 1</span>
<span class="t" style="left:406.53px;top:497px;font-size:14px;line-height:17px;color:#262626;transform:scaleX(0.9668);">Гость 2</span>
<span class="t" style="left:507.40px;top:487px;font-size:14px;line-height:17px;color:#262626;transform:scaleX(0.9830);">2 adults</span>
<span class="t" style="left:587.36px;top:487px;font-size:14px;line-height:17px;color:#262626;transform:scaleX(0.9426);">18.05.2020 14:00</span>
<span class="t" style="left:716.90px;top:487px;font-size:14px;line-height:17px;color:#262626;transform:scaleX(0.9413);">21.05.2020 12:00</span>
<div class="pill" style="left:843px;top:489px;width:6px;height:12px;background:#fbbf14"></div>
<span class="t" style="left:850.70px;top:487px;font-size:14px;line-height:17px;color:#262626;transform:scaleX(0.8999);">DBL</span>
<div class="pill" style="left:973px;top:489px;width:6px;height:12px;background:#b896db"></div>
<span class="t" style="left:980.80px;top:487px;font-size:14px;line-height:17px;color:#262626;transform:scaleX(0.8314);">GROUP</span>
<div class="rsv" style="left:1043px;top:484px;width:68px;height:20px;"></div>
<span class="t" style="left:1049.60px;top:486px;font-size:14px;line-height:17px;color:rgba(70,70,70,.6);transform:scaleX(0.9031);">Reserved</span>
<span class="t" style="left:1182.20px;top:487px;font-size:14px;line-height:17px;color:#262626;transform:scaleX(0.8667);">0,00</span>
<span class="t" style="left:1211.00px;top:487px;font-size:14px;line-height:17px;color:#262626;">₽</span>
<span class="t" style="left:1267.00px;top:487px;font-size:14px;line-height:17px;color:#262626;transform:scaleX(0.8750);">6</span>
<div style="left:1293px;top:487px;width:16px;height:16px;border:1px solid #2a76bc;border-radius:2px;background:#fff"></div>
<svg class="i" style="left:1293px;top:487px" width="16" height="16" viewBox="0 0 16 16"><path d="M3.600 8L7.100 11.500 13.200 5.200" fill="none" stroke="#2a76bc" stroke-width="2.100"/></svg>
<div style="left:400px;top:515px;width:1px;height:41px;background:#b9b9b9"></div>
<div style="left:402px;top:515px;width:1px;height:41px;background:#b9b9b9"></div>
<div style="left:1276px;top:515px;width:1px;height:41px;background:#b9b9b9"></div>
<div style="left:1278px;top:515px;width:1px;height:41px;background:#b9b9b9"></div>
<div class="cb" style="left:278px;top:529px;width:14px;height:14px;"></div>
<a class="t" style="left:300.29px;top:528px;font-size:14px;line-height:17px;color:#3b7dc4;transform:scaleX(0.9143);">№</a>
<a class="t" style="left:314.74px;top:528px;font-size:14px;line-height:17px;color:#3b7dc4;transform:scaleX(0.9580);">122152</a>
<span class="t" style="left:406.54px;top:519px;font-size:14px;line-height:17px;color:#262626;transform:scaleX(0.9560);">Гость 1</span>
<span class="t" style="left:406.53px;top:538px;font-size:14px;line-height:17px;color:#262626;transform:scaleX(0.9668);">Гость 2</span>
<span class="t" style="left:507.40px;top:528px;font-size:14px;line-height:17px;color:#262626;transform:scaleX(0.9830);">2 adults</span>
<span class="t" style="left:587.36px;top:528px;font-size:14px;line-height:17px;color:#262626;transform:scaleX(0.9426);">18.05.2020 14:00</span>
<span class="t" style="left:716.90px;top:528px;font-size:14px;line-height:17px;color:#262626;transform:scaleX(0.9413);">21.05.2020 12:00</span>
<div class="pill" style="left:843px;top:530px;width:6px;height:12px;background:#fbbf14"></div>
<span class="t" style="left:850.70px;top:528px;font-size:14px;line-height:17px;color:#262626;transform:scaleX(0.8999);">DBL</span>
<div class="pill" style="left:973px;top:530px;width:6px;height:12px;background:#b896db"></div>
<span class="t" style="left:980.80px;top:528px;font-size:14px;line-height:17px;color:#262626;transform:scaleX(0.8314);">GROUP</span>
<div class="rsv" style="left:1043px;top:525px;width:68px;height:20px;"></div>
<span class="t" style="left:1049.60px;top:527px;font-size:14px;line-height:17px;color:rgba(70,70,70,.6);transform:scaleX(0.9031);">Reserved</span>
<span class="t" style="left:1182.20px;top:528px;font-size:14px;line-height:17px;color:#262626;transform:scaleX(0.8667);">0,00</span>
<span class="t" style="left:1211.00px;top:528px;font-size:14px;line-height:17px;color:#262626;">₽</span>
<span class="t" style="left:1267.00px;top:528px;font-size:14px;line-height:17px;color:#262626;transform:scaleX(0.8750);">6</span>
<div style="left:1293px;top:528px;width:16px;height:16px;border:1px solid #2a76bc;border-radius:2px;background:#fff"></div>
<svg class="i" style="left:1293px;top:528px" width="16" height="16" viewBox="0 0 16 16"><path d="M3.600 8L7.100 11.500 13.200 5.200" fill="none" stroke="#2a76bc" stroke-width="2.100"/></svg>
<div style="left:242px;top:557px;width:1085px;height:42px;background:#fff"></div>
<div style="left:242px;top:556px;width:1085px;height:1px;background:#c4c4c4"></div>
<div style="left:242px;top:599px;width:1085px;height:1px;background:#c4c4c4"></div>
<div style="left:242px;top:556px;width:3px;height:44px;background:#8cc84b"></div>
<svg class="i" style="left:255px;top:572px" width="13" height="13" viewBox="0 0 13 13"><circle cx="6.500" cy="6.500" r="5.700" fill="none" stroke="#333" stroke-width="1.100"/><path d="M4.200 4.200l4 4M8.700 5.300v3.400H5.300" fill="none" stroke="#333" stroke-width="1.300"/></svg>
<div class="cb" style="left:283px;top:570px;width:14px;height:14px;"></div>
<span class="t" style="left:307.90px;top:570px;font-size:14px;line-height:17px;color:#222;transform:scaleX(0.8933);">3x SGL</span>
<svg class="i" style="left:392.8px;top:569.8px;" width="17.2" height="16" viewBox="0 0 24 22"><g fill="#999"><circle cx="5" cy="3.100" r="3"/><circle cx="19" cy="3.100" r="3"/><path d="M0 11.500C0 8.500 1.200 6.600 2.600 6.600c0.700 0.500 1.500 0.800 2.400 0.800 0.700 0 1.400-0.200 2-0.500 0 1.600 0.600 3 1.600 4.200-1.300 0.100-2.400 0.700-3.300 1.700H1.600C0.600 12.800 0 12.300 0 11.500z"/><path d="M24 11.500c0-3-1.200-4.900-2.600-4.900-0.700 0.500-1.500 0.800-2.400 0.800-0.700 0-1.400-0.200-2-0.500 0 1.600-0.600 3-1.600 4.200 1.300 0.100 2.400 0.700 3.300 1.700h3.700c1 0 1.600-0.500 1.600-1.300z"/><circle cx="12" cy="7.400" r="5.300" fill="#fff"/><path fill="#fff" d="M2.300 22.600c0-6 3-10.300 6-10.300h7.400c3 0 6 4.300 6 10.300z"/><circle cx="12" cy="7.400" r="4.400"/><path d="M3.200 19.300c0-4.300 1.800-7.700 4.700-7.700 1.100 1 2.500 1.600 4.100 1.600s3-0.600 4.100-1.600c2.900 0 4.700 3.400 4.700 7.700 0 1.600-1.100 2.700-2.800 2.700H6c-1.700 0-2.800-1.100-2.800-2.700z"/></g></svg>
<span class="t" style="left:412.79px;top:570px;font-size:14px;line-height:17px;color:#222;transform:scaleX(1.0135);">1 adult</span>
<span class="t" style="left:462.75px;top:570px;font-size:14px;line-height:17px;color:#222;transform:scaleX(0.9480);">∑3 adults</span>
<svg class="i" style="left:527.0px;top:569.8px;" width="15" height="16" viewBox="0 0 15 16"><rect x="0.600" y="2.600" width="13.800" height="12.800" rx="0.800" fill="none" stroke="#a5a5a5" stroke-width="1.100"/><rect x="0.600" y="2.600" width="13.800" height="3.200" fill="#a5a5a5"/><rect x="3" y="0.400" width="2.400" height="4.400" rx="1.100" fill="#fff" stroke="#a5a5a5" stroke-width="0.900"/><rect x="9.600" y="0.400" width="2.400" height="4.400" rx="1.100" fill="#fff" stroke="#a5a5a5" stroke-width="0.900"/><path d="M4.10 6v9.500" stroke="#a5a5a5" stroke-width="0.700" opacity=".7"/><path d="M7.50 6v9.500" stroke="#a5a5a5" stroke-width="0.700" opacity=".7"/><path d="M10.90 6v9.500" stroke="#a5a5a5" stroke-width="0.700" opacity=".7"/><path d="M0.700 9.20h13.600" stroke="#a5a5a5" stroke-width="0.700" opacity=".7"/><path d="M0.700 12.40h13.600" stroke="#a5a5a5" stroke-width="0.700" opacity=".7"/></svg>
<span class="t" style="left:546.25px;top:570px;font-size:14px;line-height:17px;color:#222;transform:scaleX(0.9509);">18 май (14:00) - 21 май (12:00)</span>
<svg class="i" style="left:779px;top:574px;" width="17" height="11" viewBox="0 0 17 11"><rect x="0.800" y="0.800" width="15.400" height="9.400" fill="#f4f4f4" stroke="#9a9a9a" stroke-width="1.600"/><path d="M1.500 3.200A2 2 0 0 0 3.400 1.500M15.500 3.200A2 2 0 0 1 13.600 1.500M1.500 7.800A2 2 0 0 1 3.400 9.500M15.500 7.800A2 2 0 0 0 13.600 9.500" fill="none" stroke="#9a9a9a" stroke-width="0.900"/><ellipse cx="8.500" cy="5.500" rx="2.500" ry="2.900" fill="#fff" stroke="#9a9a9a" stroke-width="1"/><path d="M8 4.300l0.700-0.500v3.500" fill="none" stroke="#777" stroke-width="0.900"/></svg>
<div class="pill" style="left:800px;top:571.5px;width:6px;height:12px;background:#b795dd"></div>
<span class="t" style="left:807.70px;top:570px;font-size:14px;line-height:17px;color:#222;transform:scaleX(0.8333);">GROUP</span>
<svg class="i" style="left:867.6px;top:571px;" width="11" height="13" viewBox="0 0 11 13"><path fill="#0a0a0a" d="M0.200 5.300h7.800v3.200c0 2.500-1.300 4.500-3.900 4.500S0.200 11 0.200 8.500z"/><ellipse cx="8.600" cy="8.200" rx="1.700" ry="2.300" fill="none" stroke="#0a0a0a" stroke-width="0.900"/><path d="M3 4.200c-0.500-1 0.900-1.500 0.300-2.600M4.800 3.800c-0.300-0.800 1-1.600 0.500-3.200" fill="none" stroke="#444" stroke-width="0.700"/></svg>
<span class="t" style="left:882.03px;top:570px;font-size:14px;line-height:17px;color:#222;transform:scaleX(0.8718);">BRKF</span>
<span class="t" style="left:919.10px;top:570px;font-size:14px;line-height:17px;color:#222;transform:scaleX(0.9026);">LNCH</span>
<span class="t" style="left:1208.90px;top:570px;font-size:14px;line-height:17px;color:#111;font-weight:700;transform:scaleX(0.9713);">13 500</span>
<span class="t" style="left:1256.64px;top:570px;font-size:14px;line-height:17px;color:#111;font-weight:700;transform:scaleX(0.8444);">₽</span>
<div class="btn" style="left:1266px;top:567px;width:28px;height:23px;border-color:#dadada"></div>
<svg class="i" style="left:1273px;top:572px;" width="14" height="14" viewBox="0 0 14 14"><path fill="#5c5c5c" d="M0.500 13.500l0.900-4L9.300 1.600l3.100 3.100-7.900 7.900zM10.200 0.700l0.500-0.500c0.400-0.400 1-0.400 1.400 0l1.700 1.700c0.400 0.400 0.400 1 0 1.400l-0.500 0.500z"/><path d="M2.600 10l7-7" stroke="#fff" stroke-width="0.700" opacity=".5"/></svg>
<div style="left:1298px;top:567px;width:27px;height:23px;background:#c9503f;border:1px solid #b9402f;border-radius:3px"></div>
<svg class="i" style="left:1305px;top:571.5px;" width="13" height="15" viewBox="0 0 13 15"><g fill="none" stroke="#fff" stroke-width="1.300"><path d="M0 3.200h13M4.300 3V1.200h4.400V3M1.800 3.500V13c0 0.700 0.500 1.300 1.200 1.300h7c0.700 0 1.200-0.600 1.200-1.300V3.500"/><path d="M4.500 5.800v6M6.500 5.800v6M8.500 5.800v6" stroke-width="1.100"/></g></svg>
<div style="left:1328px;top:227px;width:16px;height:373px;background:#fff"></div>
<div style="left:1333px;top:239px;width:4px;height:268px;background:#cdcdcd"></div>
<svg class="i" style="left:1331px;top:229px" width="8" height="6" viewBox="0 0 8 6"><path d="M4 1.200L7 4.800H1z" fill="#7a7a7a"/></svg>
<svg class="i" style="left:1331px;top:590px" width="8" height="6" viewBox="0 0 8 6"><path d="M4 4.800L7 1.200H1z" fill="#7a7a7a"/></svg>
<div style="left:242px;top:600px;width:1102px;height:17px;background:#fff"></div>
<div style="left:242px;top:599px;width:1034px;height:1px;background:#bdbdbd"></div>
<div style="left:1279px;top:600px;width:65px;height:1px;background:#c4c4c4"></div>
<div style="left:400px;top:600px;width:1px;height:17px;background:#c2c2c2"></div>
<div style="left:402px;top:600px;width:1px;height:17px;background:#c2c2c2"></div>
<div style="left:1276px;top:600px;width:1px;height:17px;background:#c2c2c2"></div>
<div style="left:1278px;top:600px;width:1px;height:17px;background:#c2c2c2"></div>
<div style="left:415px;top:606px;width:727px;height:4px;background:#d2d2d2"></div>
<svg class="i" style="left:407px;top:604px" width="6" height="8" viewBox="0 0 6 8"><path d="M1.200 4L4.800 1V7z" fill="#7a7a7a"/></svg>
<svg class="i" style="left:1267px;top:604px" width="6" height="8" viewBox="0 0 6 8"><path d="M4.800 4L1.200 1V7z" fill="#7a7a7a"/></svg>
<div style="left:966px;top:178px;width:111px;height:3px;background:#e8192c"></div>
</section>
</main>
<footer>
<div style="left:220px;top:633px;width:1128px;height:43px;background:#f8f8f8;border-top:1px solid #efefef"></div>
<div class="btn" style="left:243px;top:640px;width:88px;height:29px;border-color:#d4d4d4"></div>
<svg class="i" style="left:262px;top:649px;" width="14" height="11.2" viewBox="0 0 14 11.6"><path fill="#555" d="M0 6.300L2.400 3.900 5.300 6.800 11.600 0.400 14 2.800 5.300 11.500z"/></svg>
<button class="t" style="left:281.50px;top:645px;font-size:16px;line-height:19px;color:#4a4a4a;transform:scaleX(0.8477);">Save</button>
<div class="btn" style="left:337px;top:640px;width:174px;height:29px;border-color:#e6e6e6;"></div>
<button class="t" style="left:354.57px;top:645px;font-size:16px;line-height:19px;color:#b4b4b4;transform:scaleX(0.9308);">В предварительную</button>
<div class="btn" style="left:517px;top:640px;width:112px;height:29px;border-color:#d4d4d4;"></div>
<button class="t" style="left:535.00px;top:645px;font-size:16px;line-height:19px;color:#4a4a4a;transform:scaleX(0.9232);">Завершить</button>
<div class="btn" style="left:635px;top:640px;width:184px;height:29px;border-color:#d4d4d4;"></div>
<button class="t" style="left:653.00px;top:645px;font-size:16px;line-height:19px;color:#4a4a4a;transform:scaleX(0.9431);">Аннулировать группу</button>
<div class="btn" style="left:1272px;top:640px;width:73px;height:29px;border-color:#d4d4d4;"></div>
<button class="t" style="left:1290.00px;top:645px;font-size:16px;line-height:19px;color:#2a76bc;transform:scaleX(0.8974);">Close</button>
<div style="left:0px;top:674px;width:1348px;height:1px;background:#cfcfcf"></div>
<div style="left:0px;top:675px;width:1348px;height:1px;background:#5a5a5a"></div>
</footer>
</body></html>
